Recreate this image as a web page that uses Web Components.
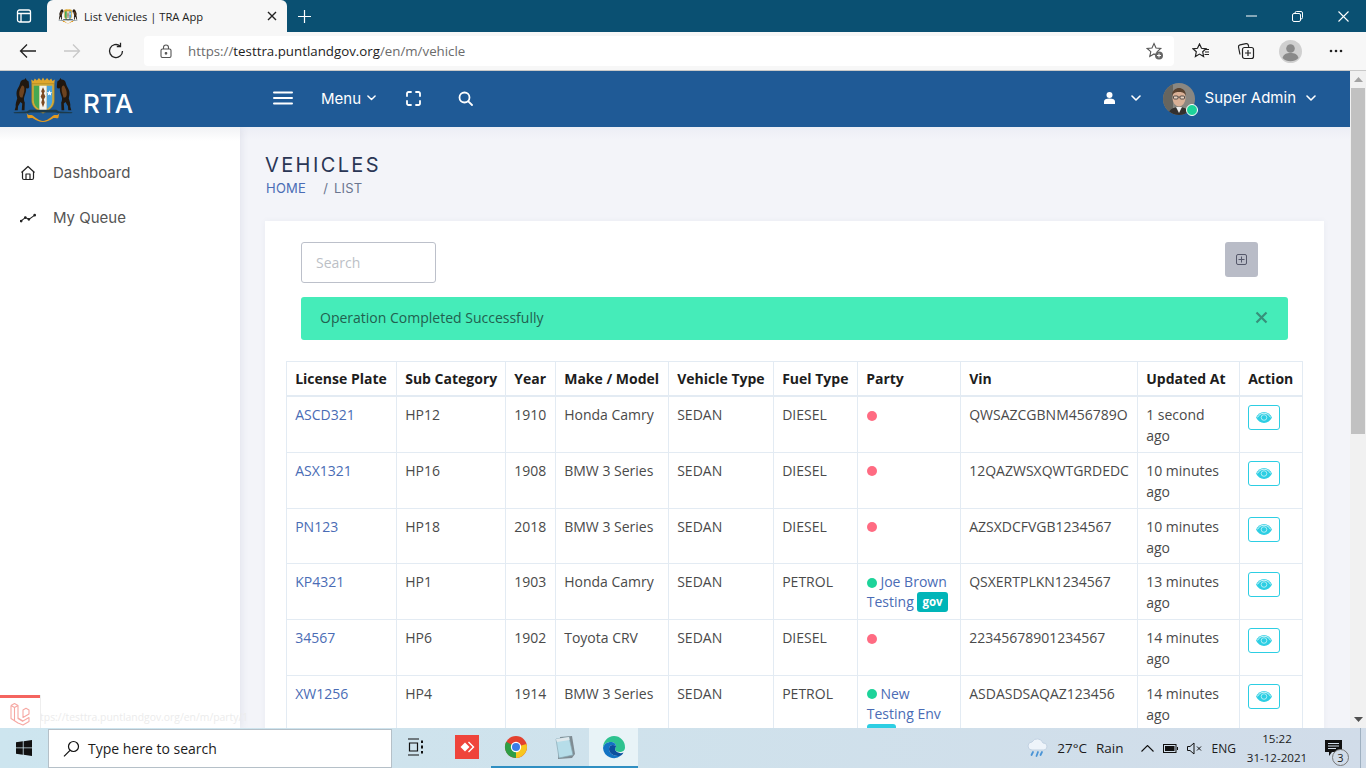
<!DOCTYPE html>
<html lang="en"><head><meta charset="utf-8"><title>List Vehicles | TRA App</title>
<style>
html,body{margin:0;height:100%;overflow:hidden}
body{width:1366px;height:768px;display:flex;flex-direction:column;font-family:"Open Sans","Noto Sans",sans-serif;background:#fff}
x-page{flex:1;min-height:0}
</style></head><body>
<x-titlebar></x-titlebar>
<x-toolbar></x-toolbar>
<x-page>
  <x-app-header slot="header"></x-app-header>
  <x-sidebar slot="side"></x-sidebar>
  <x-main slot="main">
    <x-page-title></x-page-title>
    <x-vehicle-card></x-vehicle-card>
  </x-main>
</x-page>
<x-taskbar></x-taskbar>
<script>
const def=(name,html,init)=>customElements.define(name,class extends HTMLElement{
  constructor(){super();this.attachShadow({mode:'open'}).innerHTML=html;if(init)init(this.shadowRoot)}
});
const CHEV=(c,s=10)=>`<svg width="${s}" height="${s*.6}" viewBox="0 0 10 6" fill="none" stroke="${c}" stroke-width="1.600" stroke-linecap="round" stroke-linejoin="round"><path d="M1 1l4 4 4-4"/></svg>`;
const HORSE=`<path d="M16 4.500l-2-1.500-1-2-1 1.500C9.500 2.500 8 4 7.500 6.500 6.800 9.500 5 11 4.300 14c-.6 3 .2 5 .5 7-.8 2.500-1.800 5-1.500 8l-1 3.500h3l.3-4 2.400-4 1.700 1.500-.5 6.500h2.700l.3-7.500c-.8-1.800-1.200-3.500-.4-6 .9-2.800 1.900-4.500 1.700-8l2 .3 1-1.300z" fill="#20170f"/><path d="M9 9c-1.500 3-2.500 5-2.200 8 .2 2.500 1.800 3.500 3.200 3 .6-3 2-5 1.800-9-.1-2-1.800-3.500-2.800-2z" fill="#6d4320"/>`;
const CREST=(w,h)=>`<svg width="${w}" height="${h}" viewBox="0 0 60 44">
${HORSE}<g transform="matrix(-1 0 0 1 60 0)">${HORSE}</g>
<path d="M19 7l-.5-4.500 2.200 1.300L22 1.500l2 2L26 1l2.300 2.500L30 .6l1.700 2.900L34 1l2 2.500 2-2L39.300 3.800l2.200-1.300L41 7z" fill="#e0a72c"/>
<path d="M19 6.500h22V23c0 6.500-5 9.500-11 12.500C24 32.500 19 29.500 19 23z" fill="#cfa93a" stroke="#9b7a1e" stroke-width=".5"/>
<path d="M21 8.500h5.500v23C23 29.500 21 27 21 23z" fill="#46a852"/>
<path d="M33.500 8.500H39V23c0 4-2 6.500-5.500 8.500z" fill="#4aa3dc"/>
<path d="M26.500 8.500h7v24.500l-3.500 1.500-3.500-1.500z" fill="#f3f3ec"/>
<path d="M30 10l1.800 4-1 2 1.500 3-1.500 3 .9 3-1.700 4.500-1.700-4.500.9-3-1.500-3 1.500-3-1-2z" fill="#7b4a22"/>
<path d="M36.300 13l.8 1.800 1.900.2-1.400 1.300.4 1.900-1.700-1-1.700 1 .4-1.900L33.600 15l1.900-.2z" fill="#fff"/>
<path d="M1 34.500l13-.8 3-1.700h26l3 1.700 13 .8-1 1H44.500l-2-.7H17.500l-2 .7H2z" fill="#1c3a4a"/>
<path d="M14 35c1.500 3.500 3.500 1.500 5.500 2.500 3 2 6.500 5.500 10.500 5.500s7.500-3.500 10.500-5.500c2-1 4 1 5.500-2.500l-1 5c-2 1-4-.5-5.500.5-3.500 2-6 3.500-9.500 3.500s-6-1.500-9.500-3.500c-1.500-1-3.500.5-5.500-.5z" fill="#e39a20"/>
</svg>`;

def('x-titlebar',`<style>
:host{display:flex;height:32px;background:#0a5072;color:#fff;align-items:flex-end;flex:none}
.tabs{width:47px;height:32px;display:flex;align-items:center;justify-content:center}
.tab{width:240px;height:32px;background:#f7f7f7;border-radius:6px 6px 0 0;display:flex;align-items:center;box-sizing:border-box;padding:0 10px 0 11px;color:#222;font:11.200px "Open Sans",sans-serif}
.tab span{flex:1;margin-left:6px}
.new{margin-left:2px;width:30px;height:32px;display:flex;align-items:center;justify-content:center}
.sp{flex:1}
.win{display:flex;height:32px;align-items:center}
.win b{width:46px;display:flex;justify-content:center;align-items:center;height:32px}
</style>
<div class="tabs"><svg width="16" height="16" viewBox="0 0 16 16" fill="none" stroke="#fff" stroke-width="1.300"><rect x="1.500" y="2" width="13" height="12" rx="2"/><path d="M1.500 5.500h13M5 5.500V14" /></svg></div>
<div class="tab">${CREST(20,16)}<span>List Vehicles | TRA App</span><svg width="10" height="10" viewBox="0 0 10 10" stroke="#222" stroke-width="1.400"><path d="M1 1l8 8M9 1l-8 8"/></svg></div>
<div class="new"><svg width="15" height="15" viewBox="0 0 15 15" stroke="#fff" stroke-width="1.200"><path d="M7.500 1v13M1 7.500h13"/></svg></div>
<div class="sp"></div>
<div class="win">
<b><svg width="11" height="2" viewBox="0 0 11 2" stroke="#fff"><path d="M0 1h11"/></svg></b>
<b><svg width="11" height="11" viewBox="0 0 11 11" fill="none" stroke="#fff"><rect x=".5" y="2.500" width="8" height="8" rx="1.500"/><path d="M3 2.500V2a1.500 1.500 0 0 1 1.500-1.500H9A1.500 1.500 0 0 1 10.500 2v4.500A1.500 1.500 0 0 1 9 8h-.5"/></svg></b>
<b><svg width="11" height="11" viewBox="0 0 11 11" stroke="#fff" stroke-width="1.100"><path d="M.5.5l10 10M10.500.5l-10 10"/></svg></b>
</div>`);

def('x-toolbar',`<style>
:host{display:flex;height:38px;background:#f7f7f7;border-bottom:1px solid #c9c9c9;align-items:center;flex:none;box-sizing:content-box}
.ic{display:flex;align-items:center;justify-content:center}
.url{width:1030px;height:30px;background:#fff;border-radius:4px;display:flex;align-items:center;font:13.300px "Open Sans",sans-serif;color:#6b6b6b}
.url i{font-style:normal;color:#1d1d1d}
.url svg:first-child{margin:0 16px 0 16px}
.star{margin-left:auto;margin-right:10px}
.r{display:flex;align-items:center}
</style>
<div class="ic" style="width:56px"><svg width="18" height="16" viewBox="0 0 18 16" fill="none" stroke="#222" stroke-width="1.300"><path d="M17 8H1.500M8 1.500L1.500 8 8 14.500"/></svg></div>
<div class="ic" style="width:32px"><svg width="18" height="16" viewBox="0 0 18 16" fill="none" stroke="#c8c8c8" stroke-width="1.300"><path d="M1 8h15.500M10 1.500L16.500 8 10 14.500"/></svg></div>
<div class="ic" style="width:56px"><svg width="18" height="18" viewBox="0 0 18 18" fill="none" stroke="#222" stroke-width="1.300"><path d="M15.500 9A6.500 6.500 0 1 1 13 3.900"/><path d="M13.500 .8v3.700H9.800"/></svg></div>
<div class="url"><svg width="12" height="14" viewBox="0 0 12 14" fill="none" stroke="#555" stroke-width="1.100"><rect x="1" y="5" width="10" height="8.500" rx="1.500"/><path d="M3.500 5V3.500a2.500 2.500 0 0 1 5 0V5"/><circle cx="6" cy="9.300" r=".8" fill="#555"/></svg><span>https://<i>testtra.puntlandgov.org</i>/en/m/vehicle</span>
<svg class="star" width="18" height="18" viewBox="0 0 18 18"><path d="M8 1.500l2 4.500 4.800.5-3.600 3.200 1 4.800L8 12l-4.200 2.500 1-4.800L1.200 6.500 6 6z" fill="none" stroke="#555" stroke-width="1.100"/><circle cx="13" cy="13.500" r="4" fill="#666"/><path d="M13 11.500v4M11 13.500h4" stroke="#fff"/></svg></div>
<div class="r">
<div class="ic" style="width:54px"><svg width="18" height="16" viewBox="0 0 18 16" fill="none" stroke="#222" stroke-width="1.200"><path d="M7.500 1l2 4.300 4.500.5-3.300 3 .9 4.700-4.100-2.400-4.100 2.400.9-4.700-3.300-3L5.500 5.300z"/><path d="M13 6.500h4M13 9h4M12.500 11.500h4.500"/></svg></div>
<div class="ic" style="width:36px"><svg width="18" height="18" viewBox="0 0 18 18" fill="none" stroke="#222" stroke-width="1.200"><path d="M3 12.500L1.500 5A2 2 0 0 1 3 2.800l6-1.200a2 2 0 0 1 2.300 1.400l.4 1.800"/><rect x="5.500" y="5.500" width="11" height="11" rx="2"/><path d="M11 8v6M8 11h6"/></svg></div>
<div class="ic" style="width:52px"><svg width="23" height="23" viewBox="0 0 23 23"><circle cx="11.500" cy="11.500" r="11.500" fill="#d0d0d0"/><circle cx="11.500" cy="8.500" r="4.300" fill="#8a8a8a"/><path d="M3.500 18c1-4 4-5 8-5s7 1 8 5a11.500 11.500 0 0 1-16 0z" fill="#8a8a8a"/></svg></div>
<div class="ic" style="width:40px;margin-right:6px"><svg width="14" height="4" viewBox="0 0 14 4" fill="#222"><circle cx="2" cy="2" r="1.300"/><circle cx="7" cy="2" r="1.300"/><circle cx="12" cy="2" r="1.300"/></svg></div>
</div>`);

def('x-page',`<style>
:host{display:grid;grid-template-columns:1fr 16px;grid-template-rows:56px 1fr;position:relative;min-height:0;overflow:hidden;background:#f3f4f9}
.hd{grid-column:1;grid-row:1;z-index:2;min-width:0}
.body{grid-column:1;grid-row:2;display:flex;min-height:0;overflow:hidden}
.bar{grid-column:2;grid-row:1/3;background:#f1f1f1;display:flex;flex-direction:column;align-items:center;position:relative}
.a{height:17px;display:flex;align-items:center;justify-content:center;flex:none}
.thumb{width:14px;height:346px;background:#c1c1c1;flex:none}
.g{flex:1}
</style>
<div class="hd"><slot name="header"></slot></div>
<div class="body"><slot name="side"></slot><slot name="main"></slot></div>
<div class="bar"><div class="a"><svg width="9" height="5" viewBox="0 0 9 5"><path d="M4.500 0L9 5H0z" fill="#a3a3a3"/></svg></div><div class="thumb"></div><div class="g"></div><div class="a"><svg width="9" height="5" viewBox="0 0 9 5"><path d="M4.500 5L9 0H0z" fill="#505050"/></svg></div></div>`);

def('x-app-header',`<style>
:host{display:flex;height:56px;background:#1f5a96;color:#fff;align-items:center;font-family:Inter,"Open Sans",sans-serif;box-sizing:border-box;padding-bottom:2px}
.brand{width:273px;display:flex;align-items:center;padding:2px 0 0 12px;box-sizing:border-box;flex:none}
.brand b{font:500 26px/1 Inter,sans-serif;margin-left:9px;margin-top:9px;letter-spacing:.1px}
.it{display:flex;align-items:center}
.menu{font-size:15px;margin-left:28px;gap:6px}
.sp{flex:1}
.name{font-size:15px;margin-left:10px;gap:10px;margin-right:34px;padding-bottom:1px}
.av{position:relative;width:32px;height:32px;margin:2px 0 0 22px}
.av svg{display:block;border-radius:50%}
.dot{position:absolute;right:-3px;bottom:-1px;width:10px;height:10px;border-radius:50%;background:#1dd39a;border:1px solid #fff}
</style>
<div class="brand">${CREST(62,45)}<b>RTA</b></div>
<div class="it"><svg width="20" height="14" viewBox="0 0 20 14" stroke="#fff" stroke-width="2" stroke-linecap="round"><path d="M1 1.500h18M1 7h18M1 12.500h18"/></svg></div>
<div class="it menu"><span>Menu</span>${CHEV('#fff',9)}</div>
<div class="it" style="margin-left:30px"><svg width="15" height="15" viewBox="0 0 15 15" fill="none" stroke="#fff" stroke-width="1.800" stroke-linecap="round"><path d="M1 5V2.500A1.500 1.500 0 0 1 2.500 1H5M10 1h2.500A1.500 1.500 0 0 1 14 2.500V5M14 10v2.500a1.500 1.500 0 0 1-1.500 1.500H10M5 14H2.500A1.500 1.500 0 0 1 1 12.500V10"/></svg></div>
<div class="it" style="margin-left:37px"><svg width="15" height="15" viewBox="0 0 15 15" fill="none" stroke="#fff" stroke-width="1.800" stroke-linecap="round"><circle cx="6.500" cy="6.500" r="5"/><path d="M10.300 10.300L14 14"/></svg></div>
<div class="sp"></div>
<div class="it"><svg width="11" height="12" viewBox="0 0 11 12" fill="#fff"><circle cx="5.500" cy="3" r="3"/><path d="M0 12V9.500C0 7.500 2 6.500 5.500 6.500S11 7.500 11 9.500V12z"/></svg></div>
<div class="it" style="margin-left:16px">${CHEV('#fff',10)}</div>
<div class="av"><svg width="32" height="32" viewBox="0 0 32 32"><rect width="32" height="32" fill="#8a8781"/><path d="M0 0h10v32H0z" fill="#66655f"/><path d="M5 32c1-6 6-8 11-8s10 2 11 8z" fill="#33302e"/><path d="M13 24l3 6 3-6z" fill="#eee"/><ellipse cx="16" cy="15" rx="6.500" ry="8.500" fill="#d9b096"/><path d="M9 13c0-6 4-8 7-8s7 2 7 8c-1-3-3-4-7-4s-6 1-7 4z" fill="#5a4330"/><path d="M10 14h12" stroke="#333" stroke-width=".6"/><rect x="10.500" y="13" width="4.500" height="3" rx="1" fill="#e9d2c0" stroke="#333" stroke-width=".8"/><rect x="17" y="13" width="4.500" height="3" rx="1" fill="#e9d2c0" stroke="#333" stroke-width=".8"/></svg><span class="dot"></span></div>
<div class="it name"><span>Super Admin</span>${CHEV('#fff',10)}</div>`);

def('x-sidebar',`<style>
:host{display:block;width:240px;flex:none;background:linear-gradient(#f1f2f5,#fff 14px);box-shadow:1px 0 8px rgba(60,70,110,.1);position:relative;z-index:1;font:15px/1 Inter,"Open Sans",sans-serif;color:#555;height:100%}
nav{padding-top:23px}
a{display:flex;align-items:center;height:45px;padding-left:20px;gap:17px}
a svg{width:16px;flex:none}
.lv{position:absolute;left:0;bottom:0;width:40px;height:33px;background:#fff;border-top:3px solid #f4645f;display:flex;align-items:center;justify-content:center;box-shadow:1px 0 0 #eee;box-sizing:border-box;padding-top:2px}
.st{position:absolute;left:30px;bottom:3px;font:10.400px/16px "Open Sans",sans-serif;color:#ececec;white-space:nowrap}
</style>
<nav>
<a><svg width="16" height="16" viewBox="0 0 16 16" fill="none" stroke="#222" stroke-width="1.200" stroke-linejoin="round"><path d="M1.500 7.500L8 1.500l6.500 6"/><path d="M2.500 6.500v6.500A1.500 1.500 0 0 0 4 14.500h8a1.500 1.500 0 0 0 1.500-1.500V6.500"/><path d="M6 14.500V9h4v5.500"/></svg><span>Dashboard</span></a>
<a><svg width="18" height="10" viewBox="0 0 18 10" fill="none" stroke="#222" stroke-width="1.200"><path d="M1 8.500l5-4 4 2 7-5"/><circle cx="1.300" cy="8.500" r=".9" fill="#222"/><circle cx="6" cy="4.500" r=".9" fill="#222"/><circle cx="10" cy="6.500" r=".9" fill="#222"/><circle cx="16.500" cy="1.800" r=".9" fill="#222"/></svg><span>My Queue</span></a>
</nav>
<div class="st">https://testtra.puntlandgov.org/en/m/party/1</div>
<div class="lv"><svg width="20" height="24" viewBox="0 0 20 24" fill="none" stroke="#f6a8a3" stroke-width="1.100" stroke-linejoin="round"><path d="M1 3.500L4.500 1.500 8 3.500v13l5 3M1 3.500v13L8 21l5 2 6-3.500v-4l-6 3.500-5-3M1 3.500L4.500 5.500 8 3.500M4.500 5.500v13M13 8l3-1.800 3 1.800v4l-6 3.500v-3.500z"/></svg></div>`);

def('x-main',`<style>
:host{display:block;flex:1;min-width:0;padding:0 26px 0 25px;box-sizing:border-box;overflow:hidden;background:linear-gradient(#eceef5,#f3f4f9 12px)}
</style><slot></slot>`);

def('x-page-title',`<style>
:host{display:block;padding-top:27px;height:94px;box-sizing:border-box}
h1{margin:0;font:400 20px/22px Inter,sans-serif;letter-spacing:2.400px;color:#2a3655}
div{font:13px/18px Inter,sans-serif;margin:3px 0 0 1px;color:#6b7690;display:flex;letter-spacing:.15px}
a{color:#4a6cb5;margin-right:17px;letter-spacing:.25px}
b{font-weight:400;margin-right:6px}
</style><h1>VEHICLES</h1><div><a>HOME</a><b>/</b><span>LIST</span></div>`);

const rows=[
['ASCD321','HP12','1910','Honda Camry','SEDAN','DIESEL',null,'QWSAZCGBNM456789O','1 second ago'],
['ASX1321','HP16','1908','BMW 3 Series','SEDAN','DIESEL',null,'12QAZWSXQWTGRDEDC','10 minutes ago'],
['PN123','HP18','2018','BMW 3 Series','SEDAN','DIESEL',null,'AZSXDCFVGB1234567','10 minutes ago'],
['KP4321','HP1','1903','Honda Camry','SEDAN','PETROL',['Joe Brown','Testing','gov','#00b5b8'],'QSXERTPLKN1234567','13 minutes ago'],
['34567','HP6','1902','Toyota CRV','SEDAN','DIESEL',null,'22345678901234567','14 minutes ago'],
['XW1256','HP4','1914','BMW 3 Series','SEDAN','PETROL',['New','Testing Env','prv','#2dcee3'],'ASDASDSAQAZ123456','14 minutes ago']];
const heads=[['License Plate',110],['Sub Category',109],['Year',50],['Make / Model',113],['Vehicle Type',105],['Fuel Type',84],['Party',103],['Vin',177],['Updated At',102],['Action',63]];
const EYE=`<svg width="16" height="11" viewBox="0 0 16 11"><path d="M8 0C4.500 0 1.700 2.200 0 5.500 1.700 8.800 4.500 11 8 11s6.300-2.200 8-5.500C14.300 2.200 11.500 0 8 0z" fill="#2dcee3"/><path d="M1.300 5.500C2.800 3 5 1.200 8 1.200S13.200 3 14.700 5.500" fill="none" stroke="#fff" stroke-width=".8"/><circle cx="8" cy="5.500" r="2.800" fill="#2dcee3" stroke="#fff" stroke-width=".6"/></svg>`;

def('x-status-dot',`<style>:host{display:inline-block;width:10px;height:10px;border-radius:50%;background:var(--c,#ff6b82);vertical-align:-0.5px}</style>`);
def('x-eye-button',`<style>:host{display:flex;width:32px;height:25px;box-sizing:border-box;border:1px solid #2dcee3;border-radius:3px;align-items:center;justify-content:center;background:#fff;margin:1px 0 0 0}</style>${EYE}`);

def('x-vehicle-card',`<style>
:host{display:block;background:#fff;height:600px;box-shadow:0 0 6px rgba(60,70,110,.05);padding:21px 21px 0;box-sizing:border-box;font:14px/21px "Open Sans",sans-serif;color:#4a4a4a}
.top{display:flex;justify-content:space-between;margin:0 15px;align-items:flex-start;padding-right:30px}
.s{width:135px;height:41px;box-sizing:border-box;border:1px solid #bcc0ca;border-radius:3px;padding:0 14px;display:flex;align-items:center;color:#bcbfc6}
.b{width:33px;height:35px;background:#b9bcc7;border-radius:3px;display:flex;align-items:center;justify-content:center}
.alert{margin:14px 15px 21px;height:43px;background:#45ecb9;border-radius:3px;display:flex;align-items:center;justify-content:space-between;padding:0 20px 2px 19px;box-sizing:border-box;color:#22604f}
.alert svg{margin-top:-1px}
table{border-collapse:collapse;table-layout:fixed;width:1016px}
th,td{border:1px solid #e3ebf3;padding:7px 8px 5.750px 8.200px;text-align:left;vertical-align:top;font-weight:400}
th{font-weight:700;color:#1d1d1d;white-space:nowrap;border-bottom-width:2px;padding:6px 8px 6px 8.200px}
a{color:#4a6cb5}
td.p{line-height:20px;padding-top:8px;padding-left:8.800px}
.g{display:inline-block;height:20px;box-sizing:border-box;color:#fff;font:700 11.500px/19px "Open Sans",sans-serif;border-radius:3px;padding:0 5px;vertical-align:top}
</style>
<div class="top"><div class="s">Search</div><div class="b"><svg width="11" height="11" viewBox="0 0 11 11" fill="none" stroke="#55586a"><rect x=".5" y=".5" width="10" height="10" rx="1.500"/><path d="M5.500 2.500v6M2.500 5.500h6"/></svg></div></div>
<div class="alert"><span>Operation Completed Successfully</span><svg width="13" height="13" viewBox="0 0 13 13" stroke="#37907a" stroke-width="2.200"><path d="M1.500 1.500l10 10M11.500 1.500l-10 10"/></svg></div>
<table><colgroup></colgroup><thead><tr></tr></thead><tbody></tbody></table>`,r=>{
  r.querySelector('colgroup').innerHTML=heads.map(h=>`<col style="width:${h[1]}px">`).join('');
  r.querySelector('thead tr').innerHTML=heads.map(h=>`<th>${h[0]}</th>`).join('');
  r.querySelector('tbody').innerHTML=rows.map(x=>{
    const p=x[6]?`<x-status-dot style="--c:#1dd39a"></x-status-dot> <a>${x[6][0]}</a><br><a>${x[6][1]}</a> <span class="g" style="background:${x[6][3]}">${x[6][2]}</span>`:`<x-status-dot></x-status-dot>`;
    return `<tr><td><a>${x[0]}</a></td><td>${x[1]}</td><td>${x[2]}</td><td>${x[3]}</td><td>${x[4]}</td><td>${x[5]}</td><td class="p">${p}</td><td>${x[7]}</td><td>${x[8]}</td><td><x-eye-button></x-eye-button></td></tr>`;
  }).join('');
});

def('x-taskbar',`<style>
:host{display:flex;height:40px;flex:none;align-items:center;background:linear-gradient(90deg,#cde5ef,#cfe2ec 45%,#d1dce9);font:13.500px "Open Sans",sans-serif;color:#1c1c1c;position:relative;z-index:5}
.start{width:48px;display:flex;justify-content:center}
.search{width:344px;height:39px;background:#fff;border:1px solid #b5c0c8;box-sizing:border-box;display:flex;align-items:center;padding-left:14px;gap:8px;font-size:14px}
.tb{display:flex;margin-left:1px}
.tb div{width:49px;height:40px;display:flex;align-items:center;justify-content:center;box-sizing:border-box;border-bottom:2px solid transparent}
.tb .first{padding-right:4px}
.on{border-bottom-color:#2f8fc2 !important}.act{background:#e8f3f7}
.sp{flex:1}
.t{display:flex;align-items:center}
.clock{text-align:center;font-size:11.600px;line-height:19px;margin-left:9px;width:64px}
.n{position:relative;width:40px;display:flex;justify-content:center;margin-left:4px;margin-right:13px}
.n i{position:absolute;left:19px;top:9px;width:15px;height:15px;border:1px solid #777;border-radius:50%;background:#d1dce9;font:normal 11px/15px "Open Sans",sans-serif;text-align:center}
.sep{position:absolute;right:5px;top:0;bottom:0;width:1px;background:#9fb0c0}
</style>
<div class="start"><svg width="16" height="16" viewBox="0 0 16 16" fill="#111"><path d="M0 2.300L6.800 1.300v6.200H0zM7.600 1.200L16 0v7.500H7.600zM0 8.300h6.800v6.400L0 13.700zM7.600 8.300H16V16l-8.400-1.200z"/></svg></div>
<div class="search"><svg width="17" height="17" viewBox="0 0 17 17" fill="none" stroke="#111" stroke-width="1.200"><circle cx="10.500" cy="6.500" r="5"/><path d="M7 10.300L1 16.300"/></svg><span>Type here to search</span></div>
<div class="tb">
<div class="first"><svg width="16" height="18" viewBox="0 0 16 18" fill="none" stroke="#111" stroke-width="1.200"><path d="M0 1h11M0 17h11M1.500 5h8v8h-8z"/><path d="M14 2.500v2.500M14 7.500v3M14 13v2.500" stroke-width="2"/></svg></div>
<div><svg width="24" height="24" viewBox="0 0 24 24"><rect width="24" height="24" fill="#ef443b"/><path d="M10 7.500l4.500 4.500-4.500 4.500L5.500 12z" fill="#fff"/><path d="M14 6.500l5.500 5.500-5.500 5.500-1-1 4.500-4.500L13 7.500z" fill="#fff"/></svg></div>
<div class="on"><svg width="24" height="24" viewBox="0 0 24 24"><circle cx="12" cy="12" r="11" fill="#e3412f"/><path d="M12 12L22.500 9A11 11 0 0 1 12 23z" fill="#f7c71f"/><path d="M12 12L12 23A11 11 0 0 1 2.200 6.800z" fill="#2f9e45"/><circle cx="12" cy="12" r="5.200" fill="#fff"/><circle cx="12" cy="12" r="4" fill="#3b7de8"/></svg></div>
<div class="on"><svg width="24" height="26" viewBox="0 0 24 26"><path d="M7 3l12-1 3 18-3 4-14 1z" fill="#7f8b92"/><path d="M3 5l13-2 4 18-14 3z" fill="#b6dde9" stroke="#8aa9b5" stroke-width=".7"/><path d="M3 5l13-2 .6 3L4 8z" fill="#dfe8ec"/></svg></div>
<div class="on act"><svg width="24" height="24" viewBox="0 0 24 24"><path d="M12 1a11 11 0 0 1 11 11.500c0 3-2.500 4.500-5 4.500-3 0-5-1-5-3 0-1 1-1.500 1-3 0-2.500-2.500-4-5-4C5 7 2 9 1 13 1 6 6 1 12 1z" fill="#2dc28f"/><path d="M1 13c1-4 4-6 8-6 2.500 0 5 1.500 5 4-3-2-7-1-7 3 0 4 4 7 9 7 1 0 2 0 3-.5A11 11 0 0 1 1 13z" fill="#1273c4"/><path d="M7 14c0 4 4 7 9 7 1 0 2 0 3-.5 1-.8 2-1.800 2.500-3-1 .5-2.500 1-3.500.5-2-.5-5-1.500-5-4 0-1 1-1.500 1-3 -3-2-7-1-7 3z" fill="#0b4f9e"/></svg></div>
</div>
<div class="sp"></div>
<div class="t">
<svg width="22" height="20" viewBox="0 0 22 20"><path d="M5 12a4 4 0 0 1 0-8 6 6 0 0 1 11 1 3.500 3.500 0 0 1 1 7z" fill="#eef4fa" stroke="#c2d2e2"/><path d="M6 14l-1.500 3M11 14l-1.500 4M15 14l-1.500 3" stroke="#4a94d6" stroke-width="1.800" stroke-linecap="round"/></svg>
<span style="margin-left:8px">27°C</span><span style="margin-left:9px">Rain</span>
<svg style="margin-left:17px" width="13" height="7" viewBox="0 0 13 7" fill="none" stroke="#111" stroke-width="1.100"><path d="M.5 6.500l6-6 6 6"/></svg>
<svg style="margin-left:9px" width="15" height="9" viewBox="0 0 15 9" fill="none" stroke="#111"><rect x=".5" y=".5" width="12.500" height="8"/><rect x="2" y="2" width="9.500" height="5" fill="#111" stroke="none"/><path d="M14.500 3v3"/></svg>
<svg style="margin-left:9px" width="15" height="13" viewBox="0 0 15 13" fill="none" stroke="#111"><path d="M.5 4.500h2.500L7 1v11L3 8.500H.5z"/><path d="M10 4.500l4 4M14 4.500l-4 4"/></svg>
<span style="margin-left:10px;font-size:12px">ENG</span>
</div>
<div class="clock">15:22<br>31-12-2021</div>
<div class="n"><svg width="17" height="17" viewBox="0 0 17 17"><path d="M0 0h17v12H7l-3 4v-4H0z" fill="#111"/><path d="M3 3.500h11M3 6h11M3 8.500h8" stroke="#d1dce9"/></svg><i>3</i></div>
<div class="sep"></div>
`);
</script>
</body></html>
